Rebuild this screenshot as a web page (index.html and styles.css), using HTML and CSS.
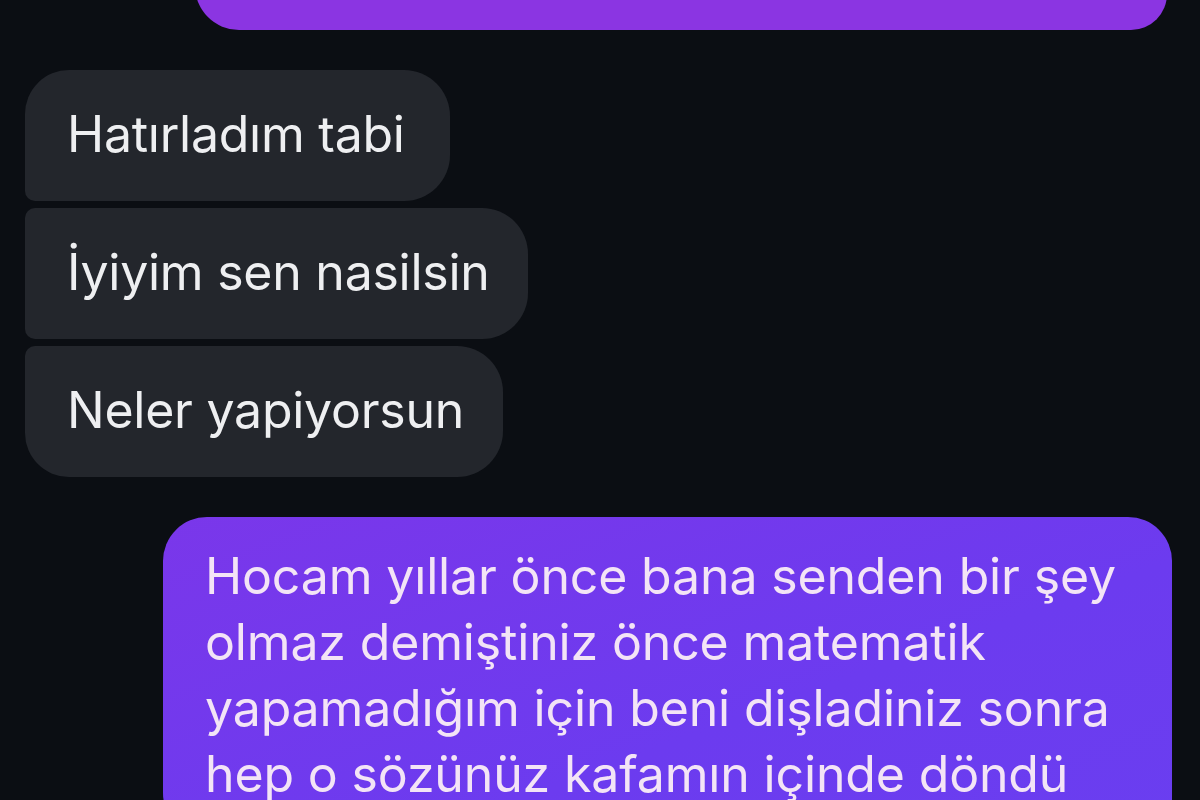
FILE: index.html
```html
<!DOCTYPE html>
<html lang="tr">
<head>
<meta charset="utf-8">
<title>Sohbet</title>
<link rel="stylesheet" href="styles.css">
</head>
<body>
<main class="chat">
  <div class="bubble out out-top"></div>
  <div class="group in-group">
    <div class="bubble in first w1">Hatırladım tabi</div>
    <div class="bubble in mid w2">İyiyim sen nasilsin</div>
    <div class="bubble in last w3">Neler yapiyorsun</div>
  </div>
  <div class="bubble out out-main">Hocam yıllar önce bana senden bir şey<br>olmaz demiştiniz önce matematik<br>yapamadığım için beni dişladiniz sonra<br>hep o sözünüz kafamın içinde döndü</div>
</main>
</body>
</html>
```
FILE: styles.css
```css
html, body {
  margin: 0;
  padding: 0;
  width: 1200px;
  height: 800px;
  overflow: hidden;
  background: #0b0e13;
}
.chat {
  display: flex;
  flex-direction: column;
  font-family: Inter, "Noto Sans", sans-serif;
  color: #f1f1f3;
}
.bubble {
  box-sizing: border-box;
  white-space: nowrap;
}
.out-top {
  margin-top: -70px;
  margin-left: 195px;
  width: 972px;
  height: 100px;
  background: #8b35e2;
  border-radius: 44px 44px 36px 44px;
}
.in-group {
  display: flex;
  flex-direction: column;
  align-items: flex-start;
  gap: 7px;
  margin-top: 40px;
  padding-left: 25px;
}
.in {
  height: 131px;
  display: flex;
  align-items: center;
  padding: 0 0 4px 42px;
  background: #23262c;
  font-size: 50px;
  letter-spacing: -0.25px;
  color: #eeeff1;
}
.in.first { border-radius: 44px 46px 46px 10px; }
.in.mid { border-radius: 10px 46px 46px 10px; }
.in.last { border-radius: 10px 46px 46px 44px; }
.w1 { width: 425px; }
.w2 { width: 503px; }
.w3 { width: 478px; }
.out-main {
  margin-top: 40px;
  margin-left: 163px;
  width: 1009px;
  height: 320px;
  padding: 26px 30px 0 42px;
  background: linear-gradient(160deg, #7a37ea 0%, #6c3bef 60%, #6a3ef0 100%);
  border-radius: 44px 44px 10px 44px;
  font-size: 50px;
  line-height: 66px;
  letter-spacing: -0.15px;
  color: #f3e4f6;
}
```
